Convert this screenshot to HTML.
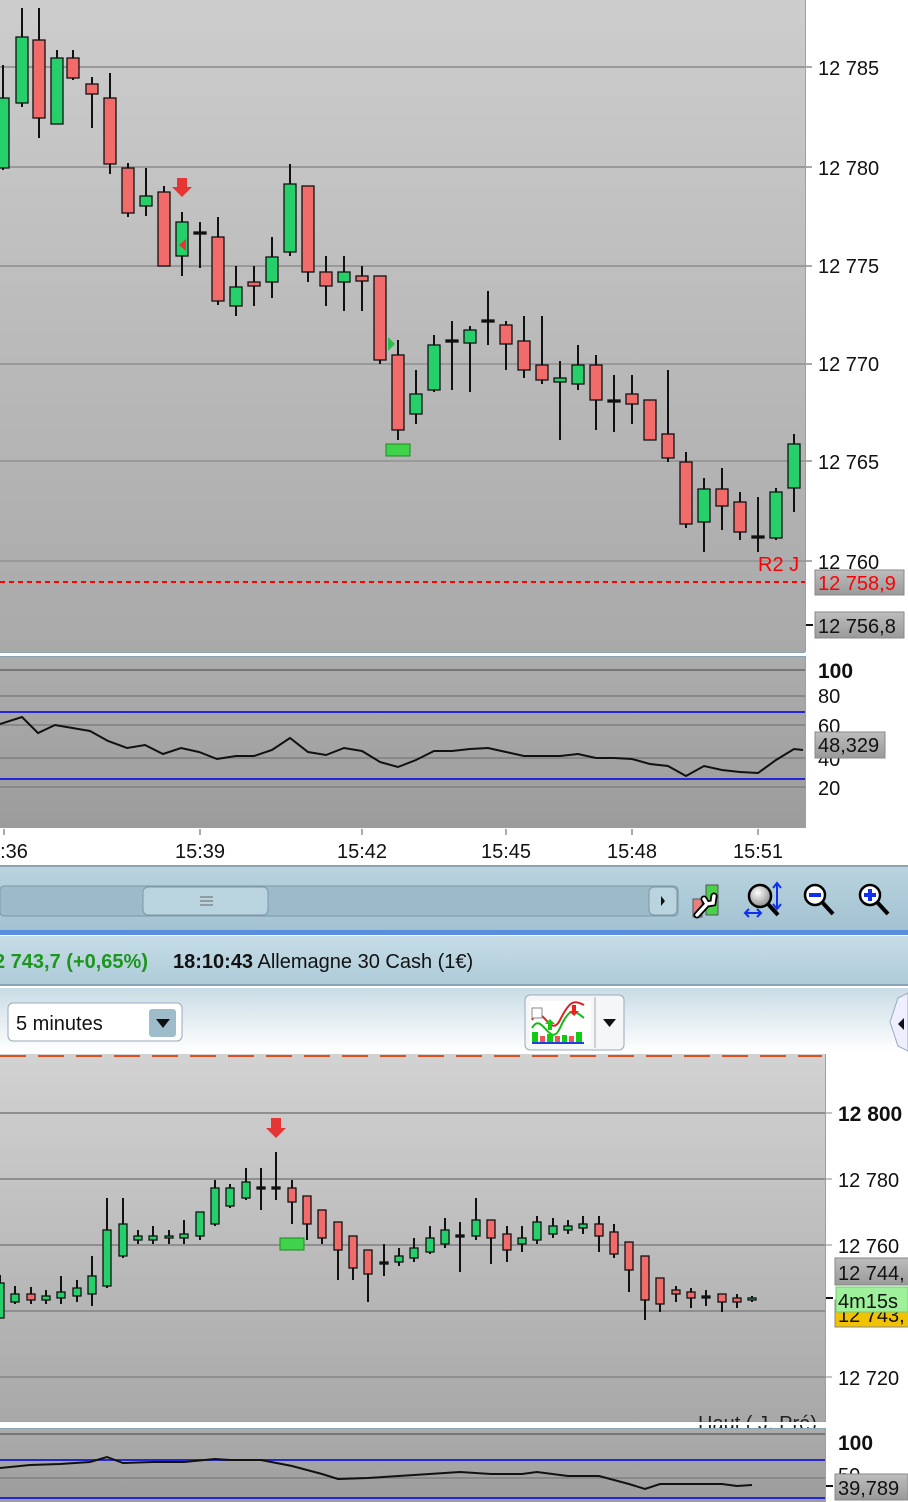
<!DOCTYPE html>
<html><head><meta charset="utf-8"><style>
html,body{margin:0;padding:0;width:908px;height:1502px;overflow:hidden;background:#fff;font-family:"Liberation Sans",sans-serif}
svg{position:absolute;left:0;top:0}
</style></head><body>
<svg id="s" width="908" height="1502" viewBox="0 0 908 1502" font-family="Liberation Sans, sans-serif">
<defs>
<linearGradient id="g1" x1="0" y1="0" x2="0" y2="1"><stop offset="0" stop-color="#cdcdcd"/><stop offset="1" stop-color="#a9a9a9"/></linearGradient>
<linearGradient id="g2" x1="0" y1="0" x2="0" y2="1"><stop offset="0" stop-color="#acacac"/><stop offset="1" stop-color="#9c9c9c"/></linearGradient>
<linearGradient id="g3" x1="0" y1="0" x2="0" y2="1"><stop offset="0" stop-color="#d2d2d2"/><stop offset="1" stop-color="#a8a8a8"/></linearGradient>
<linearGradient id="tb" x1="0" y1="0" x2="0" y2="1"><stop offset="0" stop-color="#b9d3df"/><stop offset="1" stop-color="#a3c2d1"/></linearGradient>
<linearGradient id="ib" x1="0" y1="0" x2="0" y2="1"><stop offset="0" stop-color="#c6dde7"/><stop offset="1" stop-color="#aecbd9"/></linearGradient>
<linearGradient id="wb" x1="0" y1="0" x2="0" y2="1"><stop offset="0" stop-color="#c9dce5"/><stop offset="1" stop-color="#ffffff"/></linearGradient>
<linearGradient id="bx" x1="0" y1="0" x2="0" y2="1"><stop offset="0" stop-color="#bdbdbd"/><stop offset="1" stop-color="#9a9a9a"/></linearGradient>
<radialGradient id="lens" cx="0.4" cy="0.35" r="0.6"><stop offset="0" stop-color="#fff"/><stop offset="1" stop-color="#999"/></radialGradient>
</defs>
<rect x="0" y="0" width="805" height="652" fill="url(#g1)"/>
<line x1="805.5" y1="0" x2="805.5" y2="652" stroke="#8aa4b0"/>
<line x1="0" y1="652.5" x2="805" y2="652.5" stroke="#8aa4b0"/>
<g stroke="#999" stroke-width="2">
<line x1="0" y1="67" x2="805" y2="67"/><line x1="0" y1="167" x2="805" y2="167"/><line x1="0" y1="266" x2="805" y2="266"/><line x1="0" y1="364" x2="805" y2="364"/><line x1="0" y1="461" x2="805" y2="461"/><line x1="0" y1="561" x2="805" y2="561"/>
</g>
<g id="c1"></g>
<line x1="0" y1="582" x2="805" y2="582" stroke="#f00" stroke-width="2" stroke-dasharray="5,4"/>
<path d="M177 178h10v9h5l-10 10-10-10h5z" fill="#e53535"/>
<path d="M186 239v12l-7-6z" fill="#e53535"/>
<path d="M388 337v14l7-7z" fill="#2bbd4a"/>
<rect x="386" y="444" width="24" height="12" fill="#3ed34a" stroke="#208a20"/>
<text x="758" y="571" font-size="20" fill="#f00">R2 J</text>
<g font-size="20" fill="#111">
<text x="818" y="75">12 785</text><text x="818" y="175">12 780</text><text x="818" y="273">12 775</text><text x="818" y="371">12 770</text><text x="818" y="469">12 765</text><text x="818" y="569">12 760</text>
</g>
<g stroke="#555"><line x1="806" y1="67" x2="812" y2="67"/><line x1="806" y1="167" x2="812" y2="167"/><line x1="806" y1="266" x2="812" y2="266"/><line x1="806" y1="364" x2="812" y2="364"/><line x1="806" y1="461" x2="812" y2="461"/><line x1="806" y1="561" x2="812" y2="561"/></g>
<rect x="815" y="570" width="89" height="25" fill="url(#bx)" stroke="#888"/>
<text x="818" y="590" font-size="20" fill="#f00">12 758,9</text>
<rect x="815" y="612" width="89" height="26" fill="url(#bx)" stroke="#888"/>
<line x1="806" y1="625" x2="813" y2="625" stroke="#111" stroke-width="2"/>
<text x="818" y="633" font-size="20" fill="#111">12 756,8</text>
<rect x="0" y="656" width="805" height="172" fill="url(#g2)"/>
<line x1="0" y1="656.5" x2="805" y2="656.5" stroke="#8aa4b0"/>
<line x1="805.5" y1="656" x2="805.5" y2="828" stroke="#8aa4b0"/>
<g stroke="#888" stroke-width="2"><line x1="0" y1="670" x2="805" y2="670" stroke="#777"/><line x1="0" y1="696" x2="805" y2="696"/><line x1="0" y1="725" x2="805" y2="725"/><line x1="0" y1="758" x2="805" y2="758"/><line x1="0" y1="787" x2="805" y2="787"/></g>
<g stroke="#2626d8" stroke-width="2"><line x1="0" y1="712" x2="805" y2="712"/><line x1="0" y1="779" x2="805" y2="779"/></g>
<polyline fill="none" stroke="#111" stroke-width="2" points="0,724 22,717 38,733 55,725 90,731 108,741 127,748 145,745 163,754 181,748 199,752 217,759 236,756 254,756 272,750 290,738 308,752 326,755 344,748 362,751 380,762 398,767 416,760 434,751 452,751 470,749 488,748 506,752 524,756 542,756 560,756 578,754 596,758 614,758 632,759 650,764 668,766 686,776 704,766 722,770 740,772 758,773 776,760 794,749 803,750"/>
<text x="818" y="678" font-size="21" font-weight="bold" fill="#111">100</text>
<g font-size="20" fill="#111"><text x="818" y="703">80</text><text x="818" y="733">60</text><text x="818" y="766">40</text><text x="818" y="795">20</text></g>
<rect x="815" y="732" width="70" height="26" fill="url(#bx)" stroke="#888"/>
<text x="818" y="752" font-size="20" fill="#111">48,329</text>
<g stroke="#555"><line x1="4" y1="829" x2="4" y2="835"/><line x1="200" y1="829" x2="200" y2="835"/><line x1="362" y1="829" x2="362" y2="835"/><line x1="506" y1="829" x2="506" y2="835"/><line x1="632" y1="829" x2="632" y2="835"/><line x1="758" y1="829" x2="758" y2="835"/></g>
<g font-size="20" fill="#111" text-anchor="middle"><text x="14" y="858">:36</text><text x="200" y="858">15:39</text><text x="362" y="858">15:42</text><text x="506" y="858">15:45</text><text x="632" y="858">15:48</text><text x="758" y="858">15:51</text></g>
<line x1="0" y1="866" x2="908" y2="866" stroke="#8aa4b0" stroke-width="2"/>
<rect x="0" y="867" width="908" height="63" fill="url(#tb)"/>
<rect x="0" y="886" width="678" height="30" rx="4" fill="#9dbac8" stroke="#7d98a6"/>
<rect x="143" y="887" width="125" height="28" rx="5" fill="#b9d3df" stroke="#7d98a6"/>
<g stroke="#666"><line x1="200" y1="897" x2="213" y2="897"/><line x1="200" y1="901" x2="213" y2="901"/><line x1="200" y1="905" x2="213" y2="905"/></g>
<rect x="649" y="887" width="28" height="28" rx="5" fill="#b9d3df" stroke="#7d98a6"/>
<path d="M661 896v10l4-5z" fill="#111"/>
<rect x="693" y="899" width="9" height="18" fill="#e98080" stroke="#555"/>
<rect x="706" y="885" width="12" height="30" fill="#4bd04b" stroke="#555"/>
<path d="M697 915l10-11 M704 899l3 5 6-1 1-7" stroke="#000" stroke-width="7" fill="none" stroke-linecap="round"/>
<path d="M697 915l10-11 M704 899l3 5 6-1 1-7" stroke="#fff" stroke-width="3.5" fill="none" stroke-linecap="round"/>
<circle cx="760" cy="896" r="11" fill="url(#lens)" stroke="#000" stroke-width="2.5"/>
<line x1="768" y1="904" x2="778" y2="915" stroke="#000" stroke-width="4"/>
<path d="M777 884v24 M773 888l4-5 4 5 M773 904l4 5 4-5 M745 913h16 M749 909l-4 4 4 4 M757 909l4 4-4 4" stroke="#1030f0" stroke-width="2" fill="none"/>
<circle cx="815" cy="895" r="10" fill="#fff" stroke="#000" stroke-width="2.5"/>
<line x1="809" y1="895" x2="821" y2="895" stroke="#1030f0" stroke-width="4"/>
<line x1="822" y1="902" x2="833" y2="914" stroke="#000" stroke-width="4"/>
<circle cx="870" cy="895" r="10" fill="#fff" stroke="#000" stroke-width="2.5"/>
<path d="M864 895h12 M870 889v12" stroke="#1030f0" stroke-width="4"/>
<line x1="877" y1="902" x2="888" y2="914" stroke="#000" stroke-width="4"/>
<rect x="0" y="930" width="908" height="5" fill="#5a8fde"/>
<rect x="0" y="936" width="908" height="48" fill="url(#ib)"/>
<line x1="0" y1="985" x2="908" y2="985" stroke="#8aa4b0" stroke-width="2"/>
<text x="-6" y="968" font-size="20" font-weight="bold" fill="#1c961c">2 743,7 (+0,65%)</text>
<text x="173" y="968" font-size="20" fill="#111"><tspan font-weight="bold">18:10:43</tspan> Allemagne 30 Cash (1€)</text>
<rect x="0" y="988" width="908" height="64" fill="url(#wb)"/>
<rect x="8" y="1003" width="174" height="38" rx="5" fill="#fff" stroke="#9ab"/>
<text x="16" y="1030" font-size="20" fill="#111">5 minutes</text>
<rect x="149" y="1009" width="27" height="28" rx="3" fill="#9fbccb"/>
<path d="M156 1019h14l-7 9z" fill="#111"/>
<rect x="525" y="995" width="99" height="55" rx="5" fill="#f4f6f7" stroke="#9ab"/>
<line x1="595" y1="997" x2="595" y2="1048" stroke="#aaa"/>
<path d="M603 1019h13l-6.5 8z" fill="#111"/>
<rect x="530" y="1001" width="61" height="43" fill="#fff"/>
<path d="M532 1020c10-20 18 20 28 0s14-20 24-15" stroke="#d22" stroke-width="2" fill="none"/>
<path d="M532 1028c10-18 18 22 28 0s14-18 24-10" stroke="#1b1" stroke-width="2" fill="none"/>
<rect x="532" y="1008" width="10" height="10" fill="#fff" stroke="#888"/>
<rect x="532" y="1032" width="6" height="10" fill="#1c1"/><rect x="540" y="1036" width="5" height="6" fill="#e55"/><rect x="547" y="1034" width="6" height="8" fill="#1c1"/><rect x="555" y="1036" width="5" height="6" fill="#e55"/><rect x="562" y="1035" width="5" height="7" fill="#1c1"/><rect x="569" y="1036" width="5" height="6" fill="#e55"/><rect x="576" y="1032" width="6" height="10" fill="#1c1"/>
<rect x="532" y="1042" width="52" height="2" fill="#2040e0"/>
<path d="M548 1030v-6h-3l5-5 5 5h-3v6z" fill="#1c1"/>
<path d="M572 1005v6h-3l5 5 5-5h-3v-6z" fill="#e22"/>
<path d="M898 998l10-5v58l-10-5l-8-24z" fill="#eef" stroke="#9ab"/>
<path d="M898 1024l6-6v12z" fill="#111"/>
<rect x="0" y="1054" width="825" height="368" fill="url(#g3)"/>
<line x1="825.5" y1="1054" x2="825.5" y2="1422" stroke="#8aa4b0"/>
<line x1="0" y1="1422.5" x2="825" y2="1422.5" stroke="#8aa4b0" stroke-width="2"/>
<line x1="0" y1="1056" x2="822" y2="1056" stroke="#e0501e" stroke-width="2" stroke-dasharray="26,12"/>
<g stroke="#8f8f8f" stroke-width="2"><line x1="0" y1="1113" x2="825" y2="1113"/><line x1="0" y1="1179" x2="825" y2="1179"/><line x1="0" y1="1245" x2="825" y2="1245"/><line x1="0" y1="1311" x2="825" y2="1311"/><line x1="0" y1="1377" x2="825" y2="1377"/></g>
<g id="c2"></g>
<path d="M271 1118h10v10h5l-10 10-10-10h5z" fill="#e53535"/>
<rect x="280" y="1238" width="24" height="12" fill="#3ed34a" stroke="#208a20"/>
<text x="698" y="1430" font-size="20" fill="#222">Haut ( J. Pré)</text>
<rect x="0" y="1422" width="826" height="3" fill="#fff"/>
<g stroke="#888"><line x1="826" y1="1113" x2="832" y2="1113"/><line x1="826" y1="1179" x2="832" y2="1179"/><line x1="826" y1="1245" x2="832" y2="1245"/><line x1="826" y1="1377" x2="832" y2="1377"/></g>
<text x="838" y="1121" font-size="21" font-weight="bold" fill="#111">12 800</text>
<g font-size="20" fill="#111"><text x="838" y="1187">12 780</text><text x="838" y="1253">12 760</text><text x="838" y="1385">12 720</text></g>
<rect x="835" y="1300" width="75" height="27" fill="#f2c200" stroke="#888"/>
<text x="838" y="1322" font-size="20" fill="#111">12 743,</text>
<rect x="835" y="1258" width="75" height="27" fill="url(#bx)" stroke="#888"/>
<text x="838" y="1280" font-size="20" fill="#111">12 744,</text>
<rect x="836" y="1287" width="72" height="25" fill="#9ef09a" stroke="#7c7"/>
<text x="838" y="1308" font-size="20" fill="#111">4m15s</text>
<line x1="826" y1="1298" x2="833" y2="1298" stroke="#111" stroke-width="2"/>
<rect x="0" y="1428" width="825" height="74" fill="url(#g2)"/>
<line x1="0" y1="1428.5" x2="825" y2="1428.5" stroke="#8aa4b0"/>
<line x1="825.5" y1="1428" x2="825.5" y2="1502" stroke="#8aa4b0"/>
<line x1="0" y1="1434" x2="825" y2="1434" stroke="#777" stroke-width="2"/>
<line x1="0" y1="1478" x2="825" y2="1478" stroke="#888" stroke-width="2"/>
<g stroke="#2626d8" stroke-width="2"><line x1="0" y1="1460" x2="825" y2="1460"/><line x1="0" y1="1498" x2="825" y2="1498"/></g>
<polyline fill="none" stroke="#111" stroke-width="2" points="0,1468 30,1465 60,1464 90,1462 107,1457 123,1463 153,1462 184,1462 215,1459 230,1460 261,1460 292,1466 322,1474 338,1479 368,1478 414,1475 460,1472 491,1474 522,1474 537,1472 568,1476 599,1476 629,1484 645,1489 660,1484 691,1484 722,1484 737,1486 752,1485"/>
<text x="838" y="1450" font-size="21" font-weight="bold" fill="#111">100</text>
<text x="838" y="1482" font-size="20" fill="#111">50</text>
<rect x="835" y="1474" width="73" height="26" fill="url(#bx)" stroke="#888"/>
<text x="838" y="1495" font-size="20" fill="#111">39,789</text>
<line x1="826" y1="1486" x2="833" y2="1486" stroke="#111" stroke-width="2"/>
</svg>
<script>
var NS="http://www.w3.org/2000/svg";
function cand(g,x,w,a,b,t,bt,col){
 var l=document.createElementNS(NS,"line");l.setAttribute("x1",x);l.setAttribute("x2",x);l.setAttribute("y1",t);l.setAttribute("y2",bt);l.setAttribute("stroke","#111");l.setAttribute("stroke-width",2);g.appendChild(l);
 var r=document.createElementNS(NS,"rect");var h=Math.max(b-a,2);r.setAttribute("x",x-w/2);r.setAttribute("y",a);r.setAttribute("width",w);r.setAttribute("height",h);
 r.setAttribute("fill",col=="g"?"#25cf6a":(col=="r"?"#f26b6b":"#111"));r.setAttribute("stroke","#111");r.setAttribute("stroke-width",1.3);g.appendChild(r);}
var A=[[3,98,168,65,170,"g"],[22,37,103,8,107,"g"],[39,40,118,8,138,"r"],[57,58,124,50,124,"g"],[73,58,78,50,80,"r"],[92,84,94,77,128,"r"],[110,98,164,73,174,"r"],[128,168,213,163,217,"r"],[146,196,206,168,216,"g"],[164,192,266,186,266,"r"],[182,222,256,212,276,"g"],[200,232,233,222,268,"d"],[218,237,301,217,305,"r"],[236,287,306,266,316,"g"],[254,282,286,266,306,"r"],[272,257,282,237,298,"g"],[290,184,252,164,256,"g"],[308,186,272,186,282,"r"],[326,272,286,256,306,"r"],[344,272,282,256,311,"g"],[362,276,281,266,311,"r"],[380,276,360,276,364,"r"],[398,355,430,340,440,"r"],[416,394,414,370,424,"g"],[434,345,390,335,392,"g"],[452,340,341,321,390,"d"],[470,330,343,326,392,"g"],[488,320,321,291,345,"d"],[506,325,344,321,370,"r"],[524,341,370,316,378,"r"],[542,365,380,316,384,"r"],[560,378,382,361,440,"g"],[578,365,384,345,390,"g"],[596,365,400,355,430,"r"],[614,400,401,375,432,"d"],[632,394,404,375,424,"r"],[650,400,440,400,440,"r"],[668,434,458,370,462,"r"],[686,462,524,452,528,"r"],[704,489,522,478,552,"g"],[722,489,506,468,530,"r"],[740,502,532,492,540,"r"],[758,536,537,497,552,"d"],[776,492,538,488,540,"g"],[794,444,488,434,512,"g"]];
var g1=document.getElementById("c1");A.forEach(function(c){cand(g1,c[0],12,c[1],c[2],c[3],c[4],c[5]);});
var B=[[0,1283,1318,1275,1318,"g"],[15,1294,1302,1286,1304,"g"],[31,1294,1300,1287,1304,"r"],[46,1296,1300,1290,1304,"g"],[61,1292,1298,1276,1304,"g"],[77,1288,1296,1280,1302,"g"],[92,1276,1294,1256,1306,"g"],[107,1230,1286,1198,1288,"g"],[123,1224,1256,1198,1258,"g"],[138,1236,1240,1230,1244,"g"],[153,1236,1240,1226,1244,"g"],[169,1236,1238,1230,1244,"g"],[184,1234,1238,1220,1244,"g"],[200,1212,1236,1212,1240,"g"],[215,1188,1224,1180,1226,"g"],[230,1188,1206,1184,1208,"g"],[246,1182,1198,1168,1200,"g"],[261,1187,1188,1168,1210,"d"],[276,1187,1188,1152,1200,"d"],[292,1188,1202,1180,1224,"r"],[307,1196,1224,1196,1240,"r"],[322,1210,1238,1210,1244,"r"],[338,1222,1250,1222,1280,"r"],[353,1236,1268,1236,1280,"r"],[368,1250,1274,1250,1302,"r"],[384,1262,1263,1244,1276,"d"],[399,1256,1262,1248,1266,"g"],[414,1248,1258,1238,1262,"g"],[430,1238,1252,1226,1254,"g"],[445,1230,1244,1218,1248,"g"],[460,1235,1236,1222,1272,"d"],[476,1220,1236,1198,1240,"g"],[491,1220,1238,1220,1264,"r"],[507,1234,1250,1226,1262,"r"],[522,1238,1244,1226,1252,"g"],[537,1222,1240,1216,1244,"g"],[553,1226,1234,1218,1238,"g"],[568,1226,1230,1220,1234,"g"],[583,1224,1228,1216,1234,"g"],[599,1224,1236,1216,1252,"r"],[614,1232,1254,1224,1258,"r"],[629,1242,1270,1242,1292,"r"],[645,1256,1300,1256,1320,"r"],[660,1278,1304,1278,1312,"r"],[676,1290,1294,1286,1302,"r"],[691,1292,1298,1288,1308,"r"],[706,1296,1297,1290,1306,"d"],[722,1294,1302,1294,1312,"r"],[737,1298,1302,1294,1308,"r"],[752,1298,1300,1296,1302,"g"]];
var g2=document.getElementById("c2");B.forEach(function(c){cand(g2,c[0],8,c[1],c[2],c[3],c[4],c[5]);});
</script>
</body></html>
